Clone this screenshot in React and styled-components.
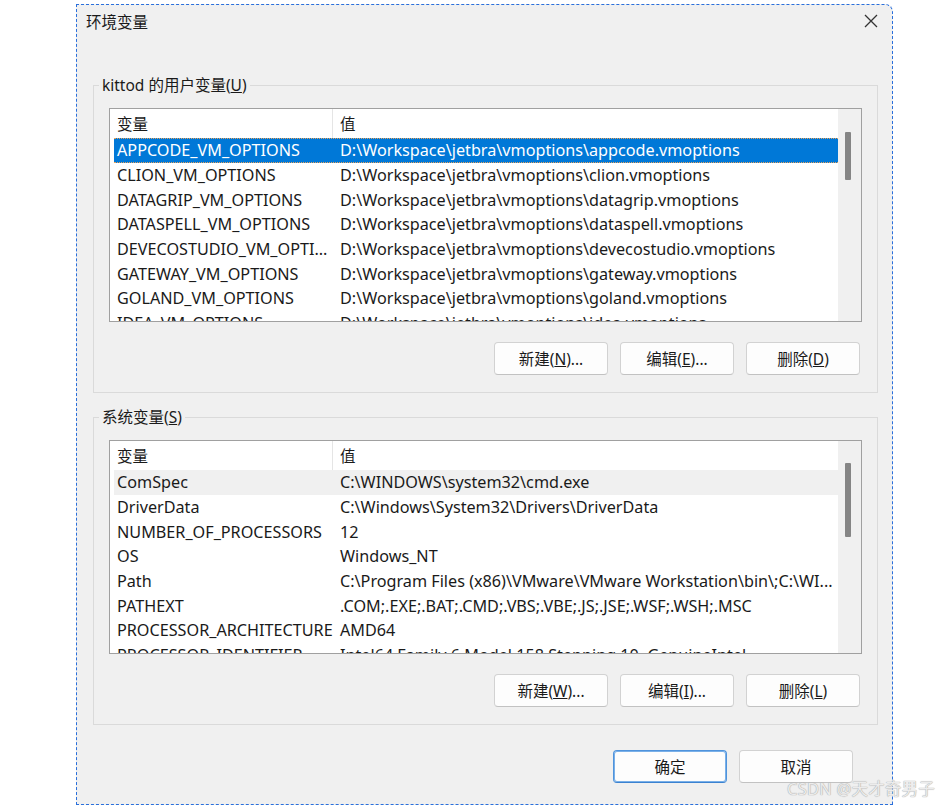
import React from "react";
import styled, { createGlobalStyle } from "styled-components";

const GlobalStyle = createGlobalStyle`
  html, body {
    margin: 0;
    padding: 0;
    background: #ffffff;
    overflow: hidden;
  }
  body {
    font-family: "Noto Sans", "Noto Sans CJK SC", sans-serif;
    font-size: 16px;
    color: #1a1a1a;
  }
`;

const Page = styled.div`
  position: relative;
  width: 942px;
  height: 805px;
  padding: 4px 0 0 76px;
  box-sizing: border-box;
`;

const Dialog = styled.div`
  width: 817px;
  height: 801px;
  box-sizing: border-box;
  background: #f0f0f0;
  border: 1px dashed #2a6fdb;
  border-top-right-radius: 8px;
  display: flex;
  flex-direction: column;
`;

const TitleBar = styled.div`
  height: 32px;
  display: flex;
  align-items: center;
  justify-content: space-between;
  padding: 0 9px 0 9px;
  flex-shrink: 0;
`;

const Title = styled.span`
  font-size: 15.5px;
  color: #1a1a1a;
`;

const CloseButton = styled.button`
  width: 24px;
  height: 24px;
  border: 0;
  background: transparent;
  padding: 0;
  display: flex;
  align-items: center;
  justify-content: center;
`;

const Body = styled.div`
  display: flex;
  flex-direction: column;
  padding: 38px 14px 0 16px;
`;

const Group = styled.fieldset`
  margin: ${(p) => (p.$first ? "0" : "14px")} 0 0 0;
  padding: 0;
  border: 1px solid #dadada;
  min-width: 0;
`;

const Legend = styled.legend`
  margin-left: 5px;
  padding: 0 3px;
  line-height: 20px;
  font-size: 15.5px;
  color: #1a1a1a;
`;

const GroupContent = styled.div`
  padding: 13px 15px 17px 15px;
  display: flex;
  flex-direction: column;
`;

const ListBox = styled.div`
  height: 214px;
  box-sizing: border-box;
  border: 1px solid #a0a0a0;
  background: #ffffff;
  display: flex;
  overflow: hidden;
`;

const Rows = styled.div`
  flex: 1;
  min-width: 0;
  padding-left: 4px;
  overflow: hidden;
`;

const HeaderRow = styled.div`
  display: grid;
  grid-template-columns: 219px 1fr;
  height: 29px;
  align-items: stretch;
`;

const HeaderCell = styled.div`
  display: flex;
  align-items: center;
  padding-left: ${(p) => (p.$value ? "7px" : "3px")};
  border-right: ${(p) => (p.$value ? "0" : "1px solid #e5e5e5")};
  font-size: 15.5px;
  color: #1a1a1a;
`;

const Row = styled.div`
  display: grid;
  grid-template-columns: 219px 1fr;
  height: 24.7px;
  box-sizing: border-box;
  align-items: center;
  white-space: nowrap;
  font-size: 16.2px;
  background: ${(p) => (p.$selected ? "#0078d7" : p.$hover ? "#f0f0f0" : "transparent")};
  color: ${(p) => (p.$selected ? "#ffffff" : "#1a1a1a")};
  border-top: 1px dotted ${(p) => (p.$selected ? "#e9a35c" : "transparent")};
  border-bottom: 1px dotted ${(p) => (p.$selected ? "#e9a35c" : "transparent")};
`;

const Cell = styled.div`
  overflow: hidden;
  white-space: nowrap;
  padding-left: ${(p) => (p.$value ? "7px" : "3px")};
`;

const ScrollTrack = styled.div`
  width: 23px;
  flex-shrink: 0;
  background: #f0f0f0;
  position: relative;
`;

const ScrollThumb = styled.div`
  position: absolute;
  left: 7px;
  width: 6px;
  background: #858585;
  border-radius: 1px;
`;

const ButtonRow = styled.div`
  display: flex;
  justify-content: flex-end;
  gap: 12px;
  margin-top: 20px;
  padding-right: 2px;
`;

const Button = styled.button`
  width: 114px;
  height: 33px;
  box-sizing: border-box;
  background: #fdfdfd;
  border: 1px solid ${(p) => (p.$default ? "#4f93dc" : "#d2d2d2")};
  border-bottom-color: ${(p) => (p.$default ? "#3b82d0" : "#c2c2c2")};
  box-shadow: ${(p) => (p.$default ? "inset 0 0 0 1px #7ab0e8" : "none")};
  border-radius: 4px;
  font-family: "Noto Sans", "Noto Sans CJK SC", sans-serif;
  font-size: 15.5px;
  color: #1a1a1a;
  padding: 0;
`;

const Footer = styled.div`
  display: flex;
  justify-content: flex-end;
  gap: 12px;
  margin-top: 25px;
  padding-right: 39px;
`;

const Watermark = styled.div`
  position: absolute;
  right: 7px;
  bottom: 5px;
  font-size: 16.5px;
  color: #ececec;
  text-shadow: 0 0 1px #a8a8a8, 0 0 1px #a8a8a8;
  letter-spacing: 0.2px;
`;

const userVars = [
  ["APPCODE_VM_OPTIONS", "D:\\Workspace\\jetbra\\vmoptions\\appcode.vmoptions"],
  ["CLION_VM_OPTIONS", "D:\\Workspace\\jetbra\\vmoptions\\clion.vmoptions"],
  ["DATAGRIP_VM_OPTIONS", "D:\\Workspace\\jetbra\\vmoptions\\datagrip.vmoptions"],
  ["DATASPELL_VM_OPTIONS", "D:\\Workspace\\jetbra\\vmoptions\\dataspell.vmoptions"],
  ["DEVECOSTUDIO_VM_OPTI...", "D:\\Workspace\\jetbra\\vmoptions\\devecostudio.vmoptions"],
  ["GATEWAY_VM_OPTIONS", "D:\\Workspace\\jetbra\\vmoptions\\gateway.vmoptions"],
  ["GOLAND_VM_OPTIONS", "D:\\Workspace\\jetbra\\vmoptions\\goland.vmoptions"],
  ["IDEA_VM_OPTIONS", "D:\\Workspace\\jetbra\\vmoptions\\idea.vmoptions"],
];

const systemVars = [
  ["ComSpec", "C:\\WINDOWS\\system32\\cmd.exe"],
  ["DriverData", "C:\\Windows\\System32\\Drivers\\DriverData"],
  ["NUMBER_OF_PROCESSORS", "12"],
  ["OS", "Windows_NT"],
  ["Path", "C:\\Program Files (x86)\\VMware\\VMware Workstation\\bin\\;C:\\WI..."],
  ["PATHEXT", ".COM;.EXE;.BAT;.CMD;.VBS;.VBE;.JS;.JSE;.WSF;.WSH;.MSC"],
  ["PROCESSOR_ARCHITECTURE", "AMD64"],
  ["PROCESSOR_IDENTIFIER", "Intel64 Family 6 Model 158 Stepping 10, GenuineIntel"],
];

const VarList = ({ items, selected, hover, thumbTop, thumbHeight }) => (
  <ListBox>
    <Rows>
      <HeaderRow>
        <HeaderCell>变量</HeaderCell>
        <HeaderCell $value>值</HeaderCell>
      </HeaderRow>
      {items.map(([name, value], i) => (
        <Row key={name} $selected={i === selected} $hover={i === hover}>
          <Cell>{name}</Cell>
          <Cell $value>{value}</Cell>
        </Row>
      ))}
    </Rows>
    <ScrollTrack>
      <ScrollThumb style={{ top: thumbTop, height: thumbHeight }} />
    </ScrollTrack>
  </ListBox>
);

const Actions = ({ keys }) => (
  <ButtonRow>
    <Button>
      新建(<u>{keys[0]}</u>)...
    </Button>
    <Button>
      编辑(<u>{keys[1]}</u>)...
    </Button>
    <Button>
      删除(<u>{keys[2]}</u>)
    </Button>
  </ButtonRow>
);

const CloseIcon = () => (
  <svg width="14" height="14" viewBox="0 0 14 14">
    <path d="M1 1 L13 13 M13 1 L1 13" stroke="#333" strokeWidth="1.3" fill="none" />
  </svg>
);

const App = () => (
  <Page>
    <GlobalStyle />
    <Dialog>
      <TitleBar>
        <Title>环境变量</Title>
        <CloseButton aria-label="关闭">
          <CloseIcon />
        </CloseButton>
      </TitleBar>
      <Body>
        <Group $first>
          <Legend>
            kittod 的用户变量(<u>U</u>)
          </Legend>
          <GroupContent>
            <VarList items={userVars} selected={0} thumbTop={23} thumbHeight={48} />
            <Actions keys={["N", "E", "D"]} />
          </GroupContent>
        </Group>
        <Group>
          <Legend>
            系统变量(<u>S</u>)
          </Legend>
          <GroupContent>
            <VarList items={systemVars} hover={0} thumbTop={22} thumbHeight={74} />
            <Actions keys={["W", "I", "L"]} />
          </GroupContent>
        </Group>
      </Body>
      <Footer>
        <Button $default>确定</Button>
        <Button>取消</Button>
      </Footer>
    </Dialog>
    <Watermark>CSDN @天才奇男子</Watermark>
  </Page>
);

export default App;
